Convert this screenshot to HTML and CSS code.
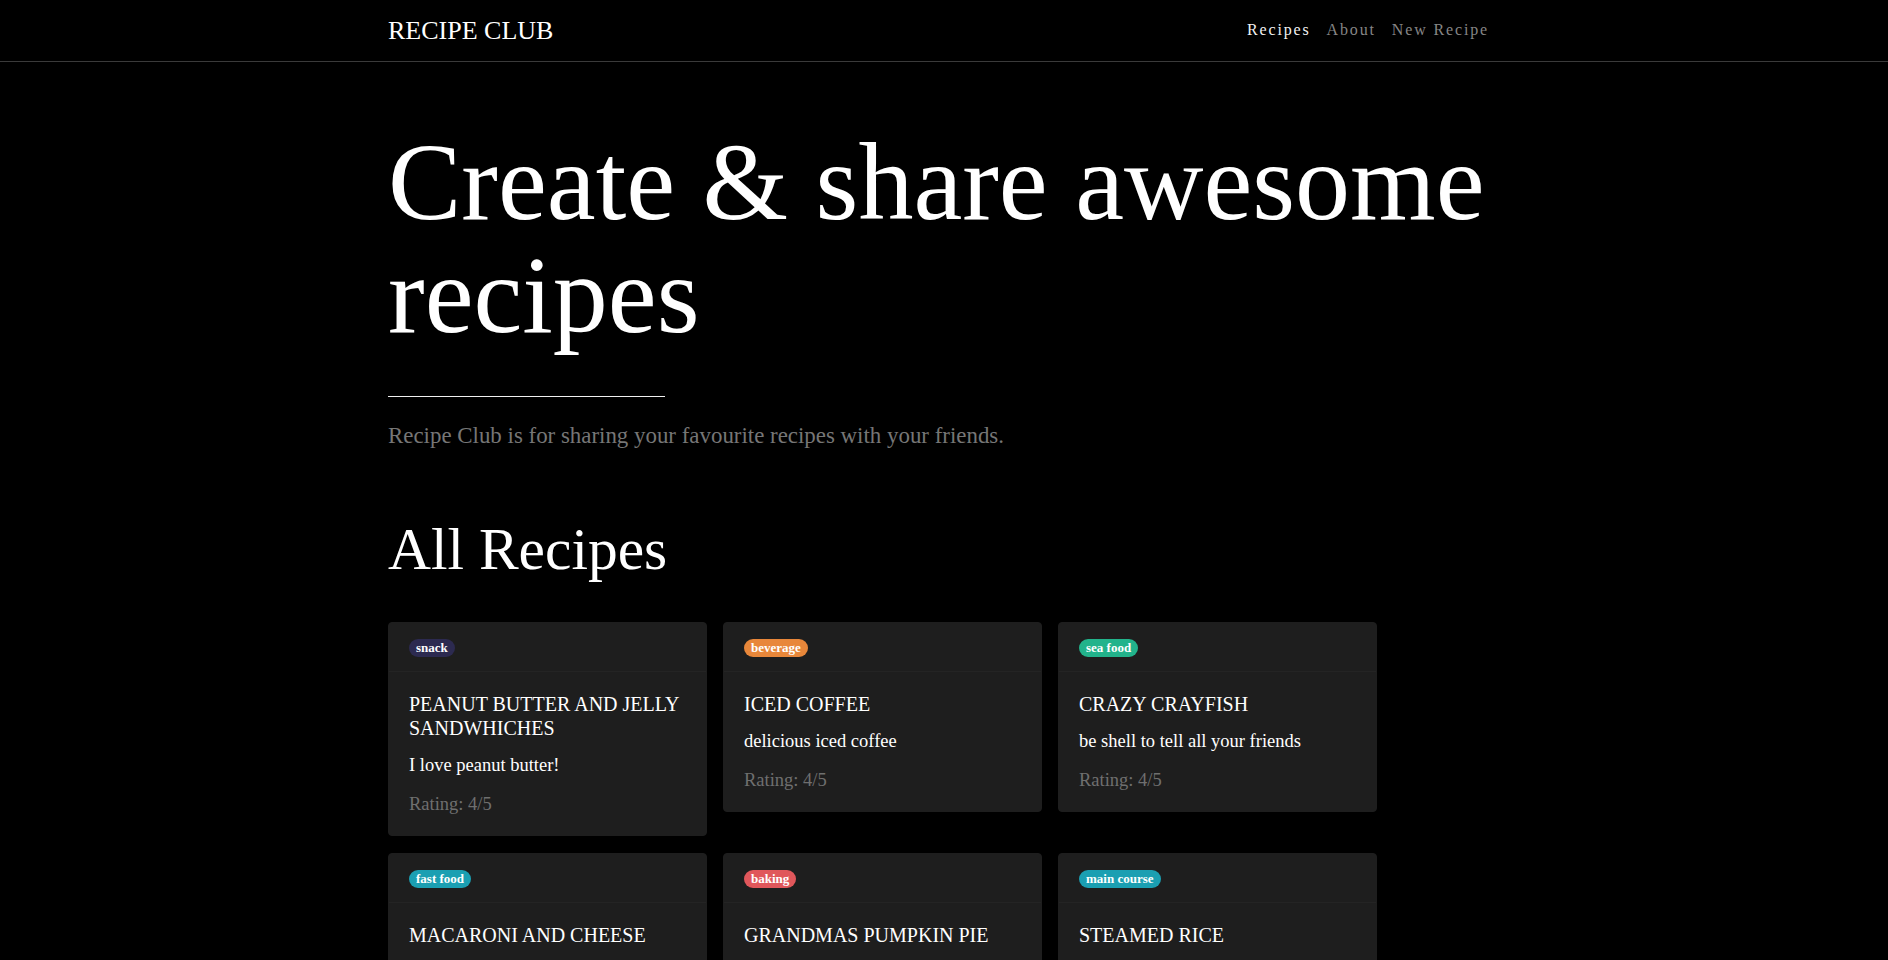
FILE: index.html
```html
<!DOCTYPE html>
<html lang="en">
<head>
<meta charset="utf-8">
<title>Recipe Club</title>
<link rel="stylesheet" href="styles.css">
</head>
<body>
<header class="navbar">
  <div class="container nav-inner">
    <a class="brand" href="#">RECIPE CLUB</a>
    <nav class="nav-links">
      <a class="nav-link active" href="#">Recipes</a>
      <a class="nav-link" href="#">About</a>
      <a class="nav-link" href="#">New Recipe</a>
    </nav>
  </div>
</header>
<main class="container main">
  <section class="hero">
    <h1 class="hero-title">Create &amp; share awesome recipes</h1>
    <hr class="hero-rule">
    <p class="lead">Recipe Club is for sharing your favourite recipes with your friends.</p>
  </section>
  <h2 class="section-title">All Recipes</h2>
  <div class="cards">
    <article class="card">
      <div class="card-header"><span class="badge badge-snack">snack</span></div>
      <div class="card-body">
        <h5 class="card-title">Peanut butter and jelly sandwhiches</h5>
        <p class="card-text">I love peanut butter!</p>
        <p class="card-rating">Rating: 4/5</p>
      </div>
    </article>
    <article class="card">
      <div class="card-header"><span class="badge badge-beverage">beverage</span></div>
      <div class="card-body">
        <h5 class="card-title">Iced coffee</h5>
        <p class="card-text">delicious iced coffee</p>
        <p class="card-rating">Rating: 4/5</p>
      </div>
    </article>
    <article class="card">
      <div class="card-header"><span class="badge badge-seafood">sea food</span></div>
      <div class="card-body">
        <h5 class="card-title">Crazy crayfish</h5>
        <p class="card-text">be shell to tell all your friends</p>
        <p class="card-rating">Rating: 4/5</p>
      </div>
    </article>
    <article class="card">
      <div class="card-header"><span class="badge badge-info">fast food</span></div>
      <div class="card-body">
        <h5 class="card-title">Macaroni and cheese</h5>
      </div>
    </article>
    <article class="card">
      <div class="card-header"><span class="badge badge-baking">baking</span></div>
      <div class="card-body">
        <h5 class="card-title">Grandmas pumpkin pie</h5>
      </div>
    </article>
    <article class="card">
      <div class="card-header"><span class="badge badge-info">main course</span></div>
      <div class="card-body">
        <h5 class="card-title">Steamed rice</h5>
      </div>
    </article>
  </div>
</main>
</body>
</html>
```
FILE: styles.css
```css
* { box-sizing: border-box; }
html, body {
  margin: 0;
  background: #000;
  color: #fff;
  font-family: "Liberation Serif", "Times New Roman", serif;
}
a { text-decoration: none; }
.container {
  max-width: 1142px;
  margin: 0 auto;
  padding: 0 15px;
}
.navbar {
  border-bottom: 1px solid #3a3a3a;
}
.nav-inner {
  display: flex;
  justify-content: space-between;
  align-items: flex-start;
  padding-top: 16px;
  padding-bottom: 15px;
}
.brand {
  color: #fff;
  font-size: 26px;
  line-height: 30px;
}
.nav-links {
  display: flex;
  margin-top: 2px;
  margin-right: 3px;
}
.nav-link {
  color: #868686;
  font-size: 16px;
  line-height: 24px;
  letter-spacing: 1.85px;
  padding: 0 8px;
}
.nav-link.active { color: #f2f2f2; }

.main { padding-top: 64px; }
.hero-title {
  margin: 0;
  font-weight: 400;
  font-size: 110px;
  line-height: 113px;
  color: #fff;
}
.hero-rule {
  width: 277px;
  margin: 44px 0 0 0;
  border: 0;
  border-top: 1px solid #f0f0f0;
}
.lead {
  margin: 23px 0 0 0;
  font-size: 22.9px;
  line-height: 32px;
  color: #767676;
}
.section-title {
  margin: 62px 0 0 0;
  font-weight: 400;
  font-size: 59.5px;
  line-height: 70px;
}
.cards {
  margin-top: 38px;
  display: flex;
  flex-wrap: wrap;
  align-items: flex-start;
  column-gap: 16px;
  row-gap: 17px;
  width: 1000px;
}
.card {
  width: 319px;
  background: #1e1e1e;
  border: 1px solid #1e1e1e;
  border-radius: 4px;
}
.card-header {
  padding: 12px 20px;
  line-height: 24px;
  border-bottom: 1px solid #242424;
}
.badge {
  display: inline-block;
  vertical-align: middle;
  font-size: 13px;
  font-weight: 700;
  line-height: 12px;
  padding: 3px 7px;
  border-radius: 10rem;
  color: #fff;
}
.badge-snack { background: #2c2a50; }
.badge-beverage { background: #e8873a; }
.badge-seafood { background: #22b38b; }
.badge-info { background: #1b9fb2; }
.badge-baking { background: #e0575b; }
.card-body { padding: 20px 20px 18px; }
.card-title {
  margin: 0 0 12px 0;
  font-size: 20px;
  font-weight: 400;
  line-height: 24px;
  text-transform: uppercase;
  color: #fff;
}
.card-text {
  margin: 0 0 13px 0;
  font-size: 18.5px;
  line-height: 26px;
  color: #fff;
}
.card-rating {
  margin: 0;
  font-size: 18.5px;
  line-height: 26px;
  color: #6f6f6f;
}
```
